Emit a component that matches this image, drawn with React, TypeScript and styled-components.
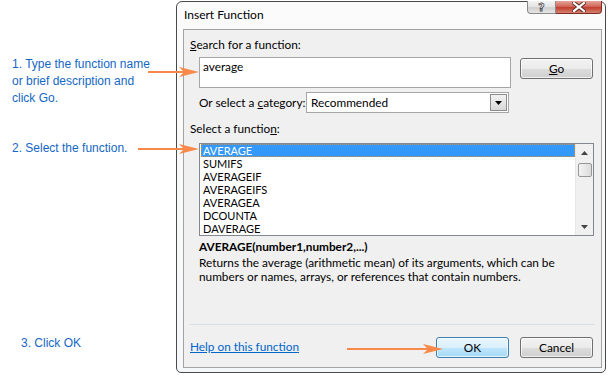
import styled, { createGlobalStyle } from 'styled-components';

const GlobalStyle = createGlobalStyle`
  html, body {
    margin: 0;
    padding: 0;
    background: #ffffff;
  }
  body {
    font-family: Lato, "Noto Sans", sans-serif;
    font-size: 12px;
    color: #000;
  }
`;

const functions = ['AVERAGE', 'SUMIFS', 'AVERAGEIF', 'AVERAGEIFS', 'AVERAGEA', 'DCOUNTA', 'DAVERAGE'];

const Page = styled.div`
  position: relative;
  width: 609px;
  height: 375px;
  padding-top: 1px;
  box-sizing: border-box;
  display: flex;
  overflow: hidden;
`;

const Notes = styled.div`
  width: 176px;
  flex-shrink: 0;
  display: flex;
  flex-direction: column;
`;

const Note = styled.div<{ $top: number; $indent: number }>`
  margin-top: ${({ $top }) => $top}px;
  padding-left: ${({ $indent }) => $indent}px;
  font-family: "Liberation Sans", Arial, sans-serif;
  font-size: 12px;
  line-height: 17px;
  color: #1467c4;
`;

const Window = styled.div`
  width: 430px;
  height: 372px;
  box-sizing: border-box;
  border: 1px solid #4a4a4a;
  border-radius: 6px 6px 5px 5px;
  background: linear-gradient(#fbfbfb, #f6f7f8);
  padding: 0 3px 4px 6px;
  display: flex;
  flex-direction: column;
`;

const TitleBar = styled.div`
  height: 27px;
  display: flex;
  justify-content: space-between;
  align-items: flex-start;
`;

const Title = styled.div`
  margin-top: 5px;
  margin-left: 1px;
  font-size: 12px;
  line-height: 15px;
`;

const CaptionButtons = styled.div`
  display: flex;
  margin-top: -1px;
`;

const CaptionButton = styled.div<{ $close?: boolean }>`
  width: ${({ $close }) => ($close ? 46 : 29)}px;
  height: 13px;
  box-sizing: border-box;
  border: 1px solid ${({ $close }) => ($close ? '#7b2f28' : '#8a8a8a')};
  border-top: none;
  border-left: ${({ $close }) => ($close ? 'none' : '1px solid #8a8a8a')};
  border-radius: ${({ $close }) => ($close ? '0 0 4px 0' : '0 0 0 4px')};
  background: ${({ $close }) =>
    $close
      ? 'linear-gradient(#e5a69b 0%, #d1685a 45%, #c2402f 55%, #d6806e 100%)'
      : 'linear-gradient(#f4f4f4 0%, #e3e3e3 50%, #cfcfcf 55%, #e6e6e6 100%)'};
  display: flex;
  align-items: center;
  justify-content: center;
`;

const HelpGlyph = styled.span`
  font-family: "DejaVu Sans", sans-serif;
  font-weight: bold;
  font-size: 11px;
  line-height: 11px;
  color: #fff;
  -webkit-text-stroke: 0.8px #4d4d4d;
`;

const Client = styled.div`
  flex: 1;
  border: 1px solid #a3a3a3;
  background: #f0f0f0;
  padding: 7px 0 9px;
  display: flex;
  flex-direction: column;
  font-size: 11.8px;
`;

const Label = styled.div`
  padding-left: 6px;
  line-height: 15px;
`;

const Key = styled.span`
  text-decoration: underline;
`;

const SearchRow = styled.div`
  margin-top: 5px;
  padding-left: 15px;
  display: flex;
  align-items: flex-start;
  gap: 9px;
`;

const SearchBox = styled.div`
  width: 312px;
  height: 31px;
  box-sizing: border-box;
  border: 1px solid #a6a6a6;
  background: #fff;
  padding: 1px 3px;
  line-height: 15px;
`;

const Button = styled.div<{ $default?: boolean }>`
  width: 73px;
  height: 21px;
  box-sizing: border-box;
  border: 1px solid ${({ $default }) => ($default ? '#3c7fb1' : '#707070')};
  border-radius: 3px;
  background: ${({ $default }) =>
    $default
      ? 'linear-gradient(#eaf6fd 0%, #d9f0fc 50%, #bee6fd 51%, #a7d9f5 100%)'
      : 'linear-gradient(#f2f2f2 0%, #ebebeb 50%, #dddddd 51%, #cfcfcf 100%)'};
  box-shadow: inset 0 0 0 1px rgba(255, 255, 255, 0.7);
  display: flex;
  align-items: center;
  justify-content: center;
  line-height: 15px;
  flex-shrink: 0;
`;

const GoButton = styled(Button)`
  margin-top: 1px;
`;

const CategoryRow = styled.div`
  margin-top: 4px;
  padding-left: 15px;
  display: flex;
  align-items: center;
`;

const CategoryLabel = styled.div`
  width: 107px;
  line-height: 15px;
  white-space: nowrap;
`;

const Select = styled.div`
  width: 203px;
  height: 21px;
  box-sizing: border-box;
  border: 1px solid #a6a6a6;
  background: #fff;
  display: flex;
  align-items: center;
`;

const SelectValue = styled.div`
  flex: 1;
  padding-left: 4px;
  line-height: 15px;
`;

const SelectArrow = styled.div`
  width: 17px;
  height: 17px;
  margin-right: 1px;
  box-sizing: border-box;
  border: 1px solid #8c8c8c;
  background: linear-gradient(#f2f2f2, #d8d8d8);
  display: flex;
  align-items: center;
  justify-content: center;
`;

const ListLabel = styled(Label)`
  margin-top: 8px;
`;

const ListBox = styled.div`
  margin: 7px 0 0 15px;
  width: 395px;
  height: 93px;
  box-sizing: border-box;
  border: 1px solid #828790;
  background: #fff;
  display: flex;
`;

const Items = styled.div`
  flex: 1;
  padding-left: 1px;
`;

const Item = styled.div<{ $selected?: boolean }>`
  height: 13px;
  box-sizing: border-box;
  padding-left: 2px;
  font-size: 11px;
  line-height: 13px;
  color: ${({ $selected }) => ($selected ? '#fff' : '#000')};
  background: ${({ $selected }) => ($selected ? '#3399ff' : 'transparent')};
  outline: ${({ $selected }) => ($selected ? '1px dotted #d98d3a' : 'none')};
  outline-offset: -1px;
`;

const ScrollBar = styled.div`
  width: 17px;
  background: #f0f0f0;
  border-left: 1px solid #e8e8e8;
  display: flex;
  flex-direction: column;
  align-items: center;
`;

const ScrollArrow = styled.div`
  height: 17px;
  display: flex;
  align-items: center;
  justify-content: center;
`;

const Thumb = styled.div`
  width: 14px;
  height: 14px;
  margin-top: 2px;
  box-sizing: border-box;
  border: 1px solid #979797;
  border-radius: 2px;
  background: linear-gradient(90deg, #f3f3f3, #dcdcdc);
`;

const ScrollTrack = styled.div`
  flex: 1;
`;

const Signature = styled.div`
  margin-top: 3px;
  padding-left: 15px;
  font-weight: bold;
  line-height: 15px;
`;

const Description = styled.div`
  margin-top: 2px;
  padding-left: 15px;
  padding-right: 20px;
  line-height: 14px;
`;

const Separator = styled.div`
  margin: auto 6px 0;
  height: 1px;
  background: #d6dfe6;
`;

const Footer = styled.div`
  margin-top: 12px;
  padding: 0 8px 0 6px;
  display: flex;
  align-items: center;
  gap: 11px;
`;

const HelpLink = styled.a`
  margin-right: auto;
  color: #0066cc;
  text-decoration: underline;
  line-height: 15px;
  margin-top: -2px;
`;

const Arrow = styled.svg`
  position: absolute;
  overflow: visible;
`;

const OrangeArrow = ({ x, y, length }: { x: number; y: number; length: number }) => (
  <Arrow style={{ left: x, top: y - 6 }} width={length} height={12}>
    <line x1={0} y1={6} x2={length - 12} y2={6} stroke="#f7894a" strokeWidth={2} />
    <path d={`M${length - 20} 1 L${length} 6 L${length - 20} 11 L${length - 15} 6 Z`} fill="#f7894a" />
  </Arrow>
);

const Tri = ({ down, color = '#000' }: { down?: boolean; color?: string }) => (
  <svg width="7" height="4" viewBox="0 0 7 4">
    <path d={down ? 'M0 0 L7 0 L3.5 4 Z' : 'M0 4 L7 4 L3.5 0 Z'} fill={color} />
  </svg>
);

export default function App() {
  return (
    <>
      <GlobalStyle />
      <Page>
        <Notes>
          <Note $top={55} $indent={12}>
            1. Type the function name
            <br />
            or brief description and
            <br />
            click Go.
          </Note>
          <Note $top={33} $indent={12}>
            2. Select the function.
          </Note>
          <Note $top={178} $indent={21}>
            3. Click OK
          </Note>
        </Notes>

        <Window>
          <TitleBar>
            <Title>Insert Function</Title>
            <CaptionButtons>
              <CaptionButton>
                <HelpGlyph>?</HelpGlyph>
              </CaptionButton>
              <CaptionButton $close>
                <svg width="14" height="10" viewBox="0 0 14 10">
                  <path d="M2 1 L12 9 M12 1 L2 9" stroke="#5a2a24" strokeWidth={4} strokeLinecap="square" />
                  <path d="M2 1 L12 9 M12 1 L2 9" stroke="#fff" strokeWidth={2.2} strokeLinecap="square" />
                </svg>
              </CaptionButton>
            </CaptionButtons>
          </TitleBar>

          <Client>
            <Label>
              <Key>S</Key>earch for a function:
            </Label>
            <SearchRow>
              <SearchBox>average</SearchBox>
              <GoButton>
                <span>
                  <Key>G</Key>o
                </span>
              </GoButton>
            </SearchRow>

            <CategoryRow>
              <CategoryLabel>
                Or select a <Key>c</Key>ategory:
              </CategoryLabel>
              <Select>
                <SelectValue>Recommended</SelectValue>
                <SelectArrow>
                  <Tri down />
                </SelectArrow>
              </Select>
            </CategoryRow>

            <ListLabel>
              Select a functio<Key>n</Key>:
            </ListLabel>
            <ListBox>
              <Items>
                {functions.map((name, i) => (
                  <Item key={name} $selected={i === 0}>
                    {name}
                  </Item>
                ))}
              </Items>
              <ScrollBar>
                <ScrollArrow>
                  <Tri color="#444" />
                </ScrollArrow>
                <Thumb />
                <ScrollTrack />
                <ScrollArrow>
                  <Tri down color="#444" />
                </ScrollArrow>
              </ScrollBar>
            </ListBox>

            <Signature>AVERAGE(number1,number2,...)</Signature>
            <Description>
              Returns the average (arithmetic mean) of its arguments, which can be numbers or names,
              arrays, or references that contain numbers.
            </Description>

            <Separator />
            <Footer>
              <HelpLink href="#">Help on this function</HelpLink>
              <Button $default>OK</Button>
              <Button>Cancel</Button>
            </Footer>
          </Client>
        </Window>

        <OrangeArrow x={148} y={72} length={51} />
        <OrangeArrow x={138} y={149} length={61} />
        <OrangeArrow x={347} y={349} length={96} />
      </Page>
    </>
  );
}
